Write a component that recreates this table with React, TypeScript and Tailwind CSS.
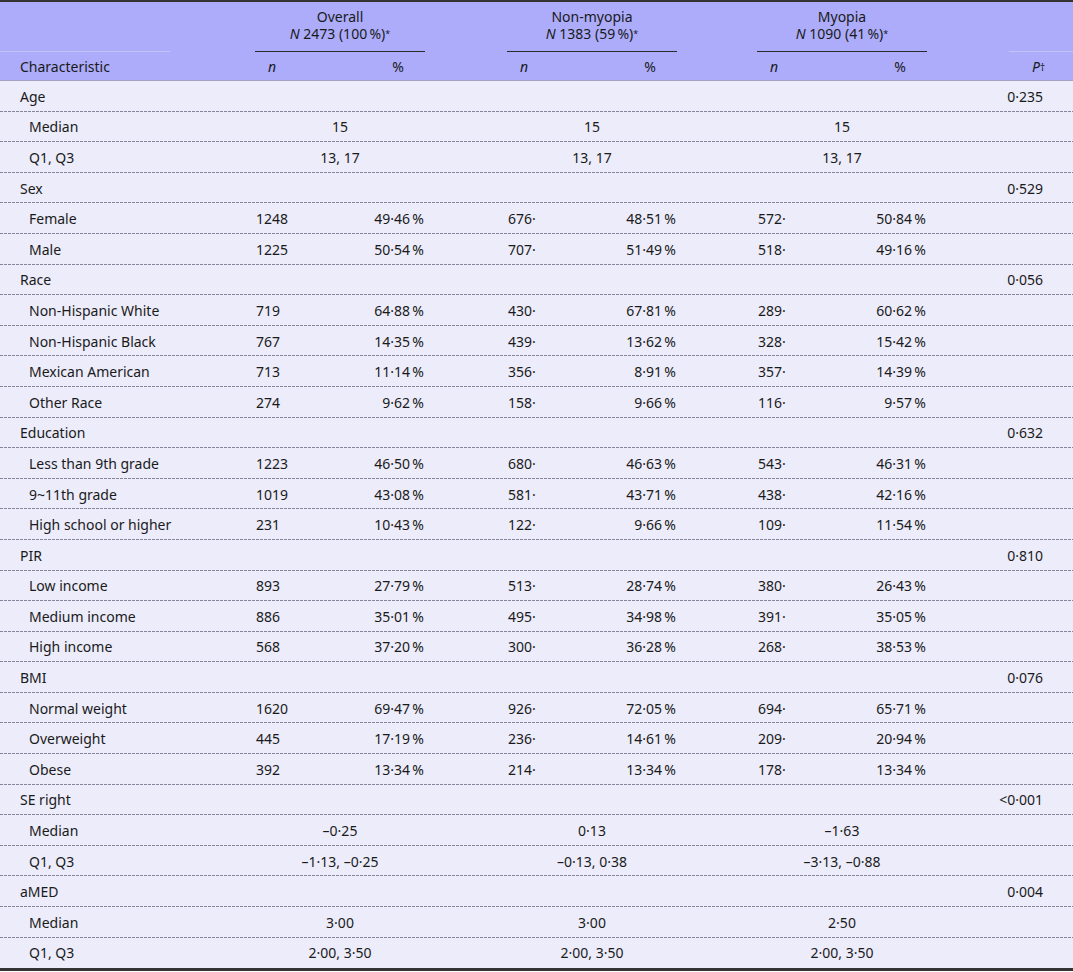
import React from "react";

type Row =
  | { kind: "group"; label: string; p: string }
  | { kind: "span"; label: string; vals: [string, string, string] }
  | { kind: "pair"; label: string; vals: [string, string][] };

const T = "\u2009";
const pc = (v: string) => v + T + "%";

const rows: Row[] = [
  { kind: "group", label: "Age", p: "0·235" },
  { kind: "span", label: "Median", vals: ["15", "15", "15"] },
  { kind: "span", label: "Q1, Q3", vals: ["13, 17", "13, 17", "13, 17"] },
  { kind: "group", label: "Sex", p: "0·529" },
  { kind: "pair", label: "Female", vals: [["1248", pc("49·46")], ["676·", pc("48·51")], ["572·", pc("50·84")]] },
  { kind: "pair", label: "Male", vals: [["1225", pc("50·54")], ["707·", pc("51·49")], ["518·", pc("49·16")]] },
  { kind: "group", label: "Race", p: "0·056" },
  { kind: "pair", label: "Non-Hispanic White", vals: [["719", pc("64·88")], ["430·", pc("67·81")], ["289·", pc("60·62")]] },
  { kind: "pair", label: "Non-Hispanic Black", vals: [["767", pc("14·35")], ["439·", pc("13·62")], ["328·", pc("15·42")]] },
  { kind: "pair", label: "Mexican American", vals: [["713", pc("11·14")], ["356·", pc("8·91")], ["357·", pc("14·39")]] },
  { kind: "pair", label: "Other Race", vals: [["274", pc("9·62")], ["158·", pc("9·66")], ["116·", pc("9·57")]] },
  { kind: "group", label: "Education", p: "0·632" },
  { kind: "pair", label: "Less than 9th grade", vals: [["1223", pc("46·50")], ["680·", pc("46·63")], ["543·", pc("46·31")]] },
  { kind: "pair", label: "9~11th grade", vals: [["1019", pc("43·08")], ["581·", pc("43·71")], ["438·", pc("42·16")]] },
  { kind: "pair", label: "High school or higher", vals: [["231", pc("10·43")], ["122·", pc("9·66")], ["109·", pc("11·54")]] },
  { kind: "group", label: "PIR", p: "0·810" },
  { kind: "pair", label: "Low income", vals: [["893", pc("27·79")], ["513·", pc("28·74")], ["380·", pc("26·43")]] },
  { kind: "pair", label: "Medium income", vals: [["886", pc("35·01")], ["495·", pc("34·98")], ["391·", pc("35·05")]] },
  { kind: "pair", label: "High income", vals: [["568", pc("37·20")], ["300·", pc("36·28")], ["268·", pc("38·53")]] },
  { kind: "group", label: "BMI", p: "0·076" },
  { kind: "pair", label: "Normal weight", vals: [["1620", pc("69·47")], ["926·", pc("72·05")], ["694·", pc("65·71")]] },
  { kind: "pair", label: "Overweight", vals: [["445", pc("17·19")], ["236·", pc("14·61")], ["209·", pc("20·94")]] },
  { kind: "pair", label: "Obese", vals: [["392", pc("13·34")], ["214·", pc("13·34")], ["178·", pc("13·34")]] },
  { kind: "group", label: "SE right", p: "<0·001" },
  { kind: "span", label: "Median", vals: ["–0·25", "0·13", "–1·63"] },
  { kind: "span", label: "Q1, Q3", vals: ["–1·13, –0·25", "–0·13, 0·38", "–3·13, –0·88"] },
  { kind: "group", label: "aMED", p: "0·004" },
  { kind: "span", label: "Median", vals: ["3·00", "3·00", "2·50"] },
  { kind: "span", label: "Q1, Q3", vals: ["2·00, 3·50", "2·00, 3·50", "2·00, 3·50"] },
];

const GRID = "grid grid-cols-[248px_184px_68px_184px_66px_184px_1fr]";
const DASH =
  "bg-[repeating-linear-gradient(90deg,#85859a_0px,#85859a_3px,transparent_3px,transparent_4px)] bg-no-repeat bg-bottom bg-[length:100%_1px]";

function Group({ title, n }: { title: string; n: string }) {
  return (
    <div className="flex flex-col items-stretch">
      <div className="flex flex-col items-center pt-[6px] leading-[17px]">
        <span>{title}</span>
        <span>
          <i>N</i> {n}
          <sup className="text-[9px] relative top-[-2px]">*</sup>
        </span>
      </div>
      <div className="mt-auto mx-[7px] h-[1.5px] bg-[#2a2a2a]" />
    </div>
  );
}

function SubHead() {
  return (
    <div className="flex justify-between items-center pl-[20px] pr-[28px]">
      <i>n</i>
      <span>%</span>
    </div>
  );
}

export default function App() {
  return (
    <div
      className="w-[1073px] h-[972px] bg-white text-[14px] text-[#1a1a1a]"
      style={{ fontFamily: '"Noto Sans", "Open Sans", sans-serif' }}
    >
      <div className="border-t-2 border-[#333333] bg-[#acacfb]">
        <div className={`${GRID} h-[50px]`}>
          <div className="flex flex-col">
            <div className="mt-auto w-[170px] h-px bg-[#c3c3fb]" />
          </div>
          <Group title="Overall" n={`2473 (100${T}%)`} />
          <div />
          <Group title="Non-myopia" n={`1383 (59${T}%)`} />
          <div />
          <Group title="Myopia" n={`1090 (41${T}%)`} />
          <div className="flex flex-col items-end">
            <div className="mt-auto w-[64px] h-px bg-[#c3c3fb]" />
          </div>
        </div>
        <div className={`${GRID} h-[29px] items-center border-b border-[#a3a3c4]`}>
          <div className="pl-[20px]">Characteristic</div>
          <SubHead />
          <div />
          <SubHead />
          <div />
          <SubHead />
          <div className="text-right pr-[28px]">
            <i>P</i>
            <sup className="text-[10px] relative top-[-1px]">†</sup>
          </div>
        </div>
      </div>
      <div className="bg-[#ececfb] border-b-[3px] border-[#333333]">
        {rows.map((r, i) => (
          <div
            key={i}
            className={`${GRID} h-[30.6px] items-center ${i < rows.length - 1 ? DASH : ""}`}
          >
            {r.kind === "group" ? (
              <>
                <div className="pl-[20px]">{r.label}</div>
                <div />
                <div />
                <div />
                <div />
                <div />
                <div className="text-right pr-[30px]">{r.p}</div>
              </>
            ) : r.kind === "span" ? (
              <>
                <div className="pl-[29px]">{r.label}</div>
                <div className="text-center">{r.vals[0]}</div>
                <div />
                <div className="text-center">{r.vals[1]}</div>
                <div />
                <div className="text-center">{r.vals[2]}</div>
                <div />
              </>
            ) : (
              <>
                <div className="pl-[29px]">{r.label}</div>
                <div className="flex justify-between px-[8px]">
                  <span>{r.vals[0][0]}</span>
                  <span>{r.vals[0][1]}</span>
                </div>
                <div />
                <div className="flex justify-between px-[8px]">
                  <span>{r.vals[1][0]}</span>
                  <span>{r.vals[1][1]}</span>
                </div>
                <div />
                <div className="flex justify-between px-[8px]">
                  <span>{r.vals[2][0]}</span>
                  <span>{r.vals[2][1]}</span>
                </div>
                <div />
              </>
            )}
          </div>
        ))}
      </div>
    </div>
  );
}
